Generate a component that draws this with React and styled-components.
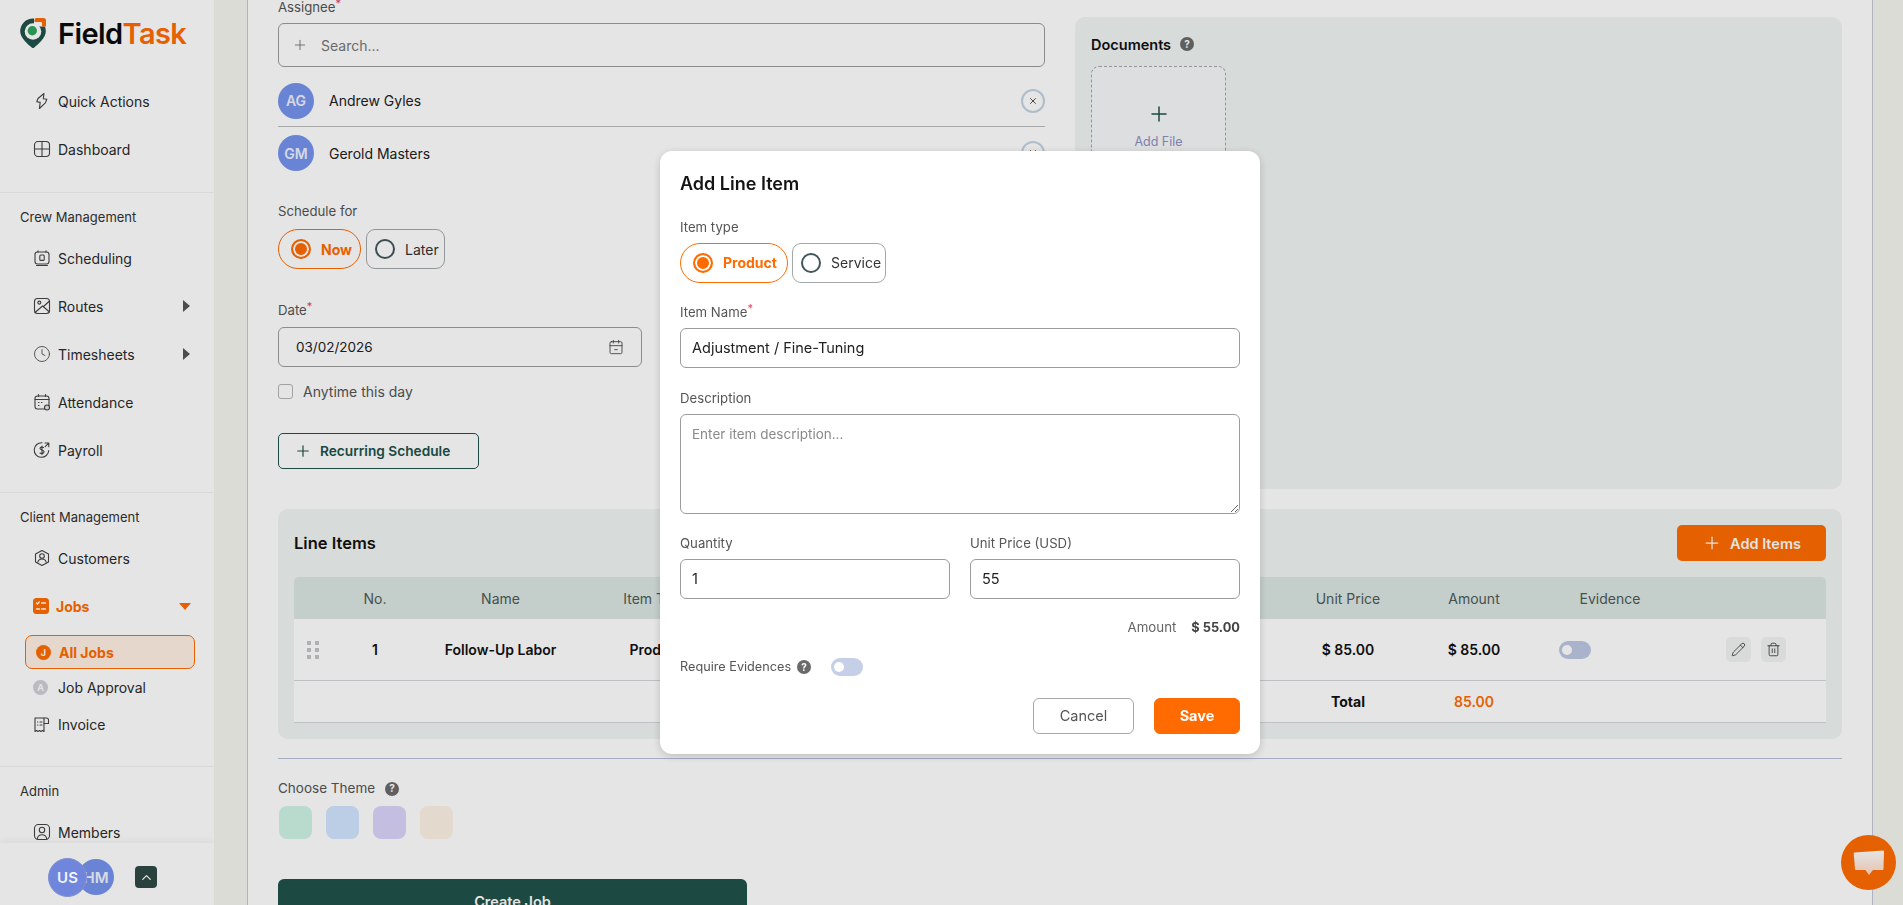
import React from "react";
import styled, { createGlobalStyle } from "styled-components";
import { Plus, X, Clock, ChevronUp, Pencil, Trash2, CalendarMinus2 } from "lucide-react";

const ACCENT = "#ff6b00";
const GREEN = "#205249";

const GlobalStyle = createGlobalStyle`
  html, body, #root { height: 100%; }
  body {
    margin: 0;
    overflow: hidden;
    background: #fff;
    color: #222;
    font-family: "Inter", "Liberation Sans", sans-serif;
    font-size: 14px;
  }
  * { box-sizing: border-box; }
`;

const Stroke = ({ children, size = 18 }) => (
  <svg width={size} height={size} viewBox="0 0 18 18" fill="none" stroke="currentColor" strokeWidth="1.1" strokeLinecap="round" strokeLinejoin="round">
    {children}
  </svg>
);

const icons = {
  quick: <Stroke><path d="M11 1.5 5 6.5 3.8 9.8l3.4.6L6.4 16.5l6-5.6 1.4-3.6-3.5-.5L11 1.5Z" /></Stroke>,
  dashboard: <Stroke><rect x="1.5" y="1.5" width="15" height="15" rx="3.5" /><path d="M9 1.5v15M1.5 9h15" /></Stroke>,
  scheduling: <Stroke><rect x="2" y="3" width="14" height="12" rx="2.5" /><path d="M5 1.8V3M13 1.8V3M3.5 16.5h11" /><rect x="6.8" y="6" width="4.4" height="5.4" rx="1" /></Stroke>,
  routes: <Stroke><rect x="1.5" y="1.5" width="15" height="15" rx="3" /><path d="m2 15.5 7.5-6.5 7 6M10.5 9.5l5.5-5" /><circle cx="6.3" cy="5.6" r="1.5" /></Stroke>,
  attendance: <Stroke><rect x="2" y="3" width="14" height="13" rx="2.5" /><path d="M2 6.5h14M5.5 1.6V3.500M12.500 1.6V3.500M5.500 9.500h.5M8.500 9.500h.5M5.500 12.500h.5" /><circle cx="14" cy="14.500" r="2.500" fill="#e5e5e5" /></Stroke>,
  payroll: <Stroke><path d="M15.800 9.500A7.300 7.300 0 1 1 9 1.700" /><path d="M12 2h3.800v3.800M15.500 2.300l-3.300 3.300" /><path d="M10.500 6.500C9.500 5.800 7 5.900 7 7.500S11 9 11 10.800 8.300 12.800 7 12M9 5v8.500" /></Stroke>,
  customers: <Stroke><path d="M9 1.500 15.500 5v8L9 16.500 2.500 13V5L9 1.500Z" /><circle cx="9" cy="7" r="2.300" /><path d="M4.800 13.300c.5-2.300 2.300-3.300 4.200-3.300s3.700 1 4.200 3.300" /></Stroke>,
  invoice: <Stroke><path d="M2 2h9v13.500l-1.500-1-1.500 1-1.500-1-1.500 1-1.500-1-1.500 1V2Z" /><path d="M4.500 6h.3M7 6h2M4.500 9h.3M7 9h2M11 2h2.500a2 2 0 0 1 2 2v3.500H11" /></Stroke>,
  members: <Stroke><rect x="1.500" y="1.500" width="15" height="15" rx="4" /><circle cx="9" cy="7" r="2.700" /><path d="M4.300 16c.3-2.800 2.300-4.200 4.700-4.200s4.400 1.400 4.700 4.200" /></Stroke>,
};

const JobsIcon = () => (
  <svg width="16" height="16" viewBox="0 0 16 16">
    <rect width="16" height="16" rx="3.500" fill={ACCENT} />
    <path d="M3.500 5l1 1 1.800-2M8.500 5h4M3.500 11h3M8.500 11h4" stroke="#fff" strokeWidth="1.300" fill="none" strokeLinecap="round" />
  </svg>
);

const Logo = () => (
  <svg width="28" height="32" viewBox="0 0 28 32">
    <path d="M14 1.500A12.800 12.800 0 0 0 1.200 14.300C1.200 21 9 27.500 13 30.700c.6.500 1.400.5 2 0 4-3.200 11.800-9.700 11.800-16.400 0-1.700-.3-3.300-.9-4.800H15V1.500h-1Z" fill={GREEN} />
    <circle cx="14" cy="14.500" r="8.300" fill="#fff" />
    <circle cx="13.300" cy="13.800" r="4.700" fill="#2ea55c" />
    <path d="M15.500 3a2 2 0 0 1 2-2h7a2.500 2.500 0 0 1 2.500 2.500v6H23V6a1 1 0 0 0-1-1h-6.500V3Z" fill={ACCENT} />
  </svg>
);

const Shell = styled.div`
  display: flex;
  height: 905px;
  overflow: hidden;
`;

const Sidebar = styled.aside`
  position: relative;
  flex: 0 0 214px;
  height: 100%;
  overflow: hidden;
  background: #fff;
`;

const Brand = styled.div`
  display: flex;
  align-items: center;
  gap: 11px;
  height: 77px;
  padding: 0 0 11px 19px;
`;

const BrandName = styled.div`
  font-size: 29px;
  font-weight: 600;
  letter-spacing: -0.6px;
  color: #0c0c0c;
  span { color: ${ACCENT}; }
`;

const NavSection = styled.div`
  padding-bottom: ${(p) => p.$pad || 18}px;
  border-bottom: 1px solid #f2f2f2;
  &:last-of-type { border-bottom: none; }
`;

const SectionTitle = styled.div`
  height: 16px;
  margin: 16px 0 9px 20px;
  font-size: 13px;
  line-height: 16px;
  color: #333;
`;

const NavRow = styled.div`
  display: flex;
  align-items: center;
  height: 48px;
  padding: 0 20px 0 33px;
  color: ${(p) => (p.$active ? ACCENT : "#2b2b2b")};
  font-weight: ${(p) => (p.$active ? 700 : 400)};
  svg { color: #444; flex: none; }
`;

const NavLabel = styled.span`
  flex: 1;
  margin-left: 7px;
  font-size: 14px;
`;

const SubNav = styled.div`
  margin: 5px 19px 5px 25px;
`;

const SubRow = styled.div`
  display: flex;
  align-items: center;
  height: ${(p) => (p.$active ? "34px" : "37px")};
  padding-left: ${(p) => (p.$active ? "10px" : "8px")};
  border: ${(p) => (p.$active ? `1px solid ${ACCENT}` : "none")};
  border-radius: 7px;
  background: ${(p) => (p.$active ? "#fff0e3" : "transparent")};
  color: ${(p) => (p.$active ? ACCENT : "#2b2b2b")};
  font-weight: ${(p) => (p.$active ? 700 : 400)};
  font-size: 14px;
  svg { color: #444; flex: none; }
`;

const SubDot = styled.span`
  display: flex;
  align-items: center;
  justify-content: center;
  flex: none;
  width: 15px;
  height: 15px;
  margin-right: ${(p) => (p.$active ? "8px" : "10px")};
  border-radius: 50%;
  background: ${(p) => (p.$active ? ACCENT : "#d0d0d6")};
  color: #fff;
  font-size: 9px;
  font-weight: 700;
`;

const Caret = styled.span`
  width: 0;
  height: 0;
  ${(p) =>
    p.$down
      ? `border-left: 6px solid transparent; border-right: 6px solid transparent; border-top: 7px solid ${ACCENT};`
      : `border-top: 6px solid transparent; border-bottom: 6px solid transparent; border-left: 7px solid #555;`}
  margin-right: ${(p) => (p.$down ? "3px" : "4px")};
`;

const SideFooter = styled.div`
  position: absolute;
  left: 0;
  right: 0;
  bottom: 0;
  display: flex;
  align-items: center;
  height: 62px;
  padding: 6px 0 0 48px;
  background: #fff;
  box-shadow: 0 -2px 8px rgba(0, 0, 0, 0.05);
`;

const FooterAvatar = styled.div`
  display: flex;
  align-items: center;
  justify-content: center;
  flex: none;
  width: ${(p) => p.$size}px;
  height: ${(p) => p.$size}px;
  margin-left: ${(p) => p.$shift || 0}px;
  border-radius: 50%;
  background: ${(p) => p.$bg};
  color: #f2f4ff;
  font-size: 15px;
  font-weight: 600;
  z-index: ${(p) => p.$z || 0};
  ${(p) => p.$ring && "border: 1px solid #7f8fd0;"}
`;

const FooterToggle = styled.div`
  display: flex;
  align-items: center;
  justify-content: center;
  width: 22px;
  height: 22px;
  margin-left: 21px;
  border-radius: 4px;
  background: #2f4a45;
  color: #fff;
`;

const Gutter = styled.div`
  flex: 0 0 ${(p) => p.$width}px;
  background: #f5f5f0;
`;

const Main = styled.main`
  flex: 1;
  min-width: 0;
  height: 100%;
  overflow: hidden;
  padding: 0 30px;
  background: #fff;
  border-left: 1px solid #c6c8d8;
  border-right: 1px solid #c6c8d8;
`;

const TopGrid = styled.div`
  display: grid;
  grid-template-columns: 767px 767px;
  gap: 30px;
  width: 1564px;
  height: 489px;
`;

const FormColumn = styled.div`
  display: flex;
  flex-direction: column;
  align-items: flex-start;
  margin-top: -1px;
`;

const FieldLabel = styled.label`
  display: block;
  margin-top: ${(p) => p.$top || 0}px;
  font-size: 13.200px;
  line-height: 17px;
  color: #555;
  sup {
    color: #e5455f;
    font-size: 11px;
    line-height: 0;
  }
`;

const SearchBox = styled.div`
  display: flex;
  align-items: center;
  width: 100%;
  height: 44px;
  margin-top: 7px;
  padding-left: 13px;
  border: 1px solid #9c9c9c;
  border-radius: 6px;
  color: #777;
  svg { color: #777; }
  span { margin-left: 13px; }
`;

const AssigneeRow = styled.div`
  display: flex;
  align-items: center;
  width: 100%;
  height: ${(p) => (p.$last ? "52px" : "60px")};
  padding-top: ${(p) => (p.$last ? "0" : "8px")};
  border-bottom: ${(p) => (p.$last ? "none" : "1px solid #bdbdbd")};
`;

const Avatar = styled.div`
  display: flex;
  align-items: center;
  justify-content: center;
  flex: none;
  width: 36px;
  height: 36px;
  border-radius: 50%;
  background: #7594ec;
  color: #eef1ff;
  font-size: 14px;
  font-weight: 600;
`;

const AssigneeName = styled.span`
  flex: 1;
  margin-left: 15px;
  font-size: 14px;
  color: #222;
`;

const RemoveButton = styled.span`
  display: flex;
  align-items: center;
  justify-content: center;
  width: 24px;
  height: 24px;
  border: 2px solid #c3d3e3;
  border-radius: 50%;
  color: #333;
`;

const RadioRow = styled.div`
  display: flex;
  gap: ${(p) => p.$gap}px;
  margin-top: ${(p) => p.$top}px;
`;

const RadioPill = styled.div`
  display: flex;
  align-items: center;
  gap: 10px;
  width: ${(p) => p.$width}px;
  height: 40px;
  padding-left: ${(p) => (p.$on ? 12 : 8)}px;
  border: 1px solid ${(p) => (p.$on ? ACCENT : "#a3a9ab")};
  border-radius: ${(p) => (p.$on ? "20px" : "9px")};
  color: ${(p) => (p.$on ? ACCENT : "#333")};
  font-size: 14px;
  font-weight: ${(p) => (p.$on ? 700 : 400)};
`;

const RadioMark = styled.span`
  flex: none;
  width: 20px;
  height: 20px;
  border-radius: 50%;
  border: 2px solid ${(p) => (p.$on ? ACCENT : "#44565c")};
  background: ${(p) => (p.$on ? ACCENT : "transparent")};
  box-shadow: ${(p) => (p.$on ? "inset 0 0 0 2px #fff" : "none")};
`;

const DateField = styled.div`
  display: flex;
  align-items: center;
  justify-content: space-between;
  width: 364px;
  height: 40px;
  margin-top: 8px;
  padding: 0 17px;
  border: 1px solid #9c9c9c;
  border-radius: 6px;
  color: #222;
  font-size: 13.500px;
  svg { color: #444; }
`;

const CheckRow = styled.div`
  display: flex;
  align-items: center;
  gap: 10px;
  margin-top: 16px;
  color: #555;
  font-size: 14px;
`;

const CheckBox = styled.span`
  width: 15px;
  height: 15px;
  border: 1px solid #b5b5b5;
  border-radius: 3px;
`;

const OutlineButton = styled.div`
  display: flex;
  align-items: center;
  gap: 8px;
  width: 201px;
  height: 36px;
  margin-top: 33px;
  padding-left: 15px;
  border: 1px solid ${GREEN};
  border-radius: 5px;
  color: ${GREEN};
  font-size: 13.700px;
  font-weight: 600;
`;

const DocsPanel = styled.section`
  margin-top: 17px;
  padding: 18px 16px;
  border-radius: 10px;
  background: #f0f4f2;
`;

const DocsTitle = styled.div`
  display: flex;
  align-items: center;
  gap: 9px;
  height: 18px;
  font-size: 14.500px;
  font-weight: 600;
  color: #111;
`;

const Help = styled.span`
  display: inline-flex;
  align-items: center;
  justify-content: center;
  width: 14px;
  height: 14px;
  border-radius: 50%;
  background: #6a6a6a;
  color: #fff;
  font-size: 10px;
  font-weight: 700;
`;

const AddFile = styled.div`
  display: flex;
  flex-direction: column;
  align-items: center;
  width: 135px;
  height: 135px;
  margin-top: 13px;
  padding-top: 35px;
  border: 1px dashed #a8a8a8;
  border-radius: 8px;
  background: #f7f8f9;
  color: ${GREEN};
  span {
    margin-top: 8px;
    color: #8d8fc0;
    font-size: 12.500px;
  }
`;

const LinePanel = styled.section`
  margin-top: 20px;
  width: 1564px;
  height: 230px;
  padding: 16px;
  border-radius: 10px;
  background: #f0f4f2;
`;

const LineHead = styled.div`
  display: flex;
  align-items: center;
  justify-content: space-between;
  height: 36px;
`;

const LineTitle = styled.h2`
  margin: 0;
  font-size: 16.500px;
  font-weight: 600;
  color: #111;
`;

const AddButton = styled.div`
  display: flex;
  align-items: center;
  justify-content: center;
  gap: 8px;
  width: 149px;
  height: 36px;
  border-radius: 5px;
  background: ${ACCENT};
  color: #fff;
  font-size: 14.500px;
  font-weight: 600;
`;

const TableRow = styled.div`
  display: grid;
  grid-template-columns: 47px 68px 183px 128px 440px 120px 136px 116px 156px 138px;
  align-items: center;
  height: ${(p) => p.$height}px;
  margin-top: ${(p) => p.$top || 0}px;
  background: ${(p) => p.$bg};
  border-bottom: ${(p) => (p.$line ? "1px solid #d5d8dc" : "none")};
  border-radius: ${(p) => (p.$head ? "5px 5px 0 0" : "0")};
`;

const Cell = styled.div`
  text-align: center;
  font-size: 14px;
  font-weight: ${(p) => p.$weight || 400};
  color: ${(p) => p.$color || (p.$head ? "#4f5a58" : "#111")};
  white-space: nowrap;
`;

const Grip = styled.div`
  display: grid;
  grid-template-columns: 4px 4px;
  gap: 3px 4px;
  margin-left: 13px;
  i {
    width: 4px;
    height: 4px;
    background: #c4c4c8;
  }
`;

const Toggle = styled.span`
  position: relative;
  display: block;
  width: 32px;
  height: 18px;
  margin-left: ${(p) => p.$left || 0}px;
  border-radius: 9px;
  background: ${(p) => p.$bg || "#bdc8e4"};
  &::after {
    content: "";
    position: absolute;
    left: 3px;
    top: 4px;
    width: 10px;
    height: 10px;
    border-radius: 50%;
    background: #fff;
  }
`;

const Actions = styled.div`
  display: flex;
  gap: 10px;
  margin-left: 38px;
`;

const ActionButton = styled.span`
  display: flex;
  align-items: center;
  justify-content: center;
  width: 25px;
  height: 25px;
  border-radius: 5px;
  background: #f2f4f4;
  color: #333;
`;

const Rule = styled.hr`
  width: 1564px;
  margin: 19px 0 0;
  border: none;
  border-top: 1px solid #bcc0da;
`;

const ThemeLabel = styled.div`
  display: flex;
  align-items: center;
  gap: 10px;
  margin-top: 21px;
  color: #555;
  font-size: 13.500px;
  line-height: 17px;
`;

const Swatches = styled.div`
  display: flex;
  gap: 14px;
  margin: 9px 0 0 1px;
`;

const Swatch = styled.span`
  width: 33px;
  height: 33px;
  border-radius: 8px;
  background: ${(p) => p.$color};
`;

const CreateButton = styled.div`
  display: flex;
  align-items: center;
  justify-content: center;
  width: 469px;
  height: 44px;
  margin-top: 40px;
  border-radius: 6px;
  background: ${GREEN};
  color: #fff;
  font-size: 14.500px;
  font-weight: 600;
`;

const ChatBubble = styled.div`
  position: fixed;
  left: 1841px;
  top: 835px;
  display: flex;
  align-items: center;
  justify-content: center;
  width: 55px;
  height: 55px;
  border-radius: 50%;
  background: ${ACCENT};
`;

const Backdrop = styled.div`
  position: fixed;
  inset: 0;
  display: flex;
  align-items: center;
  justify-content: center;
  padding-left: 17px;
  background: rgba(0, 0, 0, 0.1);
`;

const Modal = styled.div`
  width: 600px;
  margin-bottom: 1px;
  padding: 22px 20px 20px;
  border-radius: 12px;
  background: #fff;
  box-shadow: 0 2px 8px rgba(0, 0, 0, 0.18);
`;

const ModalTitle = styled.h3`
  margin: 0;
  font-size: 18px;
  line-height: 22px;
  font-weight: 600;
  color: #141414;
`;

const ModalField = styled.div`
  margin-top: ${(p) => p.$top}px;
  flex: ${(p) => (p.$grow ? 1 : "none")};
`;

const TextInput = styled.input`
  display: block;
  width: 100%;
  height: 40px;
  margin-top: 7px;
  padding: 0 11px;
  border: 1px solid #9c9c9c;
  border-radius: 6px;
  outline: none;
  background: #fff;
  color: #222;
  font: inherit;
  font-size: 14.500px;
`;

const TextArea = styled.textarea`
  display: block;
  width: 100%;
  height: 100px;
  margin-top: 7px;
  padding: 11px;
  border: 1px solid #9c9c9c;
  border-radius: 6px;
  outline: none;
  font: inherit;
  font-size: 13.500px;
  &::placeholder { color: #8a8a8a; }
`;

const TwoUp = styled.div`
  display: flex;
  gap: 20px;
`;

const AmountRow = styled.div`
  display: flex;
  justify-content: flex-end;
  align-items: baseline;
  gap: 15px;
  margin-top: 20px;
  line-height: 17px;
  color: #666;
  font-size: 13.300px;
  b {
    color: #444;
    font-size: 12.800px;
    font-weight: 700;
  }
`;

const EvidenceRow = styled.div`
  display: flex;
  align-items: center;
  gap: 6px;
  height: 18px;
  margin-top: 22px;
  color: #555;
  font-size: 12.700px;
`;

const ModalActions = styled.div`
  display: flex;
  justify-content: flex-end;
  gap: 20px;
  margin-top: 22px;
`;

const ModalButton = styled.div`
  display: flex;
  align-items: center;
  justify-content: center;
  width: ${(p) => p.$width}px;
  height: 36px;
  border: 1px solid ${(p) => (p.$primary ? ACCENT : "#a8a8a8")};
  border-radius: 6px;
  background: ${(p) => (p.$primary ? ACCENT : "#fff")};
  color: ${(p) => (p.$primary ? "#fff" : "#555")};
  font-size: 14.500px;
  font-weight: ${(p) => (p.$primary ? 700 : 400)};
`;

const themes = ["#cff4e6", "#d1e6ff", "#dbd5fb", "#fdf2e5"];

const NavItem = ({ icon, label, caret }) => (
  <NavRow>
    {icon}
    <NavLabel>{label}</NavLabel>
    {caret && <Caret />}
  </NavRow>
);

export default function App() {
  return (
    <React.Fragment>
      <GlobalStyle />
      <Shell>
        <Sidebar>
          <Brand>
            <Logo />
            <BrandName>
              Field<span>Task</span>
            </BrandName>
          </Brand>
          <NavSection $pad={19}>
            <NavItem icon={icons.quick} label="Quick Actions" />
            <NavItem icon={icons.dashboard} label="Dashboard" />
          </NavSection>
          <NavSection>
            <SectionTitle>Crew Management</SectionTitle>
            <NavItem icon={icons.scheduling} label="Scheduling" />
            <NavItem icon={icons.routes} label="Routes" caret />
            <NavItem icon={<Clock size={18} strokeWidth={1.1} />} label="Timesheets" caret />
            <NavItem icon={icons.attendance} label="Attendance" />
            <NavItem icon={icons.payroll} label="Payroll" />
          </NavSection>
          <NavSection>
            <SectionTitle>Client Management</SectionTitle>
            <NavItem icon={icons.customers} label="Customers" />
            <NavRow $active>
              <JobsIcon />
              <NavLabel>Jobs</NavLabel>
              <Caret $down />
            </NavRow>
            <SubNav>
              <SubRow $active>
                <SubDot $active>J</SubDot>
                All Jobs
              </SubRow>
              <SubRow>
                <SubDot>A</SubDot>
                Job Approval
              </SubRow>
              <SubRow>
                {icons.invoice}
                <NavLabel>Invoice</NavLabel>
              </SubRow>
            </SubNav>
          </NavSection>
          <NavSection>
            <SectionTitle>Admin</SectionTitle>
            <NavItem icon={icons.members} label="Members" />
          </NavSection>
          <SideFooter>
            <FooterAvatar $size={39} $bg="#6f86dc" $z={1} $ring>US</FooterAvatar>
            <FooterAvatar $size={36} $bg="#7594ec" $shift={-9}>HM</FooterAvatar>
            <FooterToggle>
              <ChevronUp size={15} />
            </FooterToggle>
          </SideFooter>
        </Sidebar>
        <Gutter $width={33} />
        <Main>
          <TopGrid>
            <FormColumn>
              <FieldLabel>
                Assignee<sup>*</sup>
              </FieldLabel>
              <SearchBox>
                <Plus size={16} strokeWidth={1.4} />
                <span>Search...</span>
              </SearchBox>
              <AssigneeRow>
                <Avatar>AG</Avatar>
                <AssigneeName>Andrew Gyles</AssigneeName>
                <RemoveButton>
                  <X size={10} />
                </RemoveButton>
              </AssigneeRow>
              <AssigneeRow $last>
                <Avatar>GM</Avatar>
                <AssigneeName>Gerold Masters</AssigneeName>
                <RemoveButton>
                  <X size={10} />
                </RemoveButton>
              </AssigneeRow>
              <FieldLabel $top={24}>Schedule for</FieldLabel>
              <RadioRow $top={9} $gap={5}>
                <RadioPill $on $width={83}>
                  <RadioMark $on />
                  Now
                </RadioPill>
                <RadioPill $width={79}>
                  <RadioMark />
                  Later
                </RadioPill>
              </RadioRow>
              <FieldLabel $top={33}>
                Date<sup>*</sup>
              </FieldLabel>
              <DateField>
                03/02/2026
                <CalendarMinus2 size={16} strokeWidth={1.3} />
              </DateField>
              <CheckRow>
                <CheckBox />
                Anytime this day
              </CheckRow>
              <OutlineButton>
                <Plus size={18} strokeWidth={1.6} />
                Recurring Schedule
              </OutlineButton>
            </FormColumn>
            <DocsPanel>
              <DocsTitle>
                Documents <Help>?</Help>
              </DocsTitle>
              <AddFile>
                <Plus size={24} strokeWidth={1.5} />
                <span>Add File</span>
              </AddFile>
            </DocsPanel>
          </TopGrid>
          <LinePanel>
            <LineHead>
              <LineTitle>Line Items</LineTitle>
              <AddButton>
                <Plus size={20} strokeWidth={1.5} />
                Add Items
              </AddButton>
            </LineHead>
            <TableRow $head $height={42} $top={16} $bg="#dbe6e3">
              <Cell $head />
              <Cell $head>No.</Cell>
              <Cell $head>Name</Cell>
              <Cell $head>Item Type</Cell>
              <Cell $head>Description</Cell>
              <Cell $head>Quantity</Cell>
              <Cell $head>Unit Price</Cell>
              <Cell $head>Amount</Cell>
              <Cell $head>Evidence</Cell>
              <Cell $head />
            </TableRow>
            <TableRow $height={62} $bg="#fff" $line>
              <Grip>
                <i /><i /><i /><i /><i /><i />
              </Grip>
              <Cell $weight={600}>1</Cell>
              <Cell $weight={600}>Follow-Up Labor</Cell>
              <Cell $weight={600}>Product</Cell>
              <Cell />
              <Cell $weight={600}>1</Cell>
              <Cell $weight={600}>$ 85.00</Cell>
              <Cell $weight={600}>$ 85.00</Cell>
              <Toggle $left={27} />
              <Actions>
                <ActionButton>
                  <Pencil size={15} strokeWidth={1.3} />
                </ActionButton>
                <ActionButton>
                  <Trash2 size={15} strokeWidth={1.3} />
                </ActionButton>
              </Actions>
            </TableRow>
            <TableRow $height={42} $bg="#fff" $line>
              <Cell /><Cell /><Cell /><Cell /><Cell /><Cell />
              <Cell $weight={700}>Total</Cell>
              <Cell $weight={600} $color={ACCENT}>85.00</Cell>
              <Cell /><Cell />
            </TableRow>
          </LinePanel>
          <Rule />
          <ThemeLabel>
            Choose Theme <Help>?</Help>
          </ThemeLabel>
          <Swatches>
            {themes.map((c) => (
              <Swatch key={c} $color={c} />
            ))}
          </Swatches>
          <CreateButton>Create Job</CreateButton>
        </Main>
        <Gutter $width={30} />
        <ChatBubble>
          <svg width="32" height="30" viewBox="0 0 32 30">
            <defs>
              <linearGradient id="chatFill" x1="0" y1="0" x2="0" y2="1">
                <stop offset="0" stopColor="#fff" />
                <stop offset="1" stopColor="#ffd9c2" />
              </linearGradient>
            </defs>
            <path d="M1.500 4.500 30 2.500c.6 0 1 .4 1 1l-.5 17.500c0 .6-.4 1-1 1H20l-4 5-3.500-5H3c-.6 0-1-.4-1-1L.700 5.500c0-.6.300-1 .800-1Z" fill="url(#chatFill)" />
          </svg>
        </ChatBubble>
        <Backdrop>
          <Modal>
            <ModalTitle>Add Line Item</ModalTitle>
            <ModalField $top={24}>
              <FieldLabel>Item type</FieldLabel>
              <RadioRow $top={7} $gap={4}>
                <RadioPill $on $width={108}>
                  <RadioMark $on />
                  Product
                </RadioPill>
                <RadioPill $width={94}>
                  <RadioMark />
                  Service
                </RadioPill>
              </RadioRow>
            </ModalField>
            <ModalField $top={21}>
              <FieldLabel>
                Item Name<sup>*</sup>
              </FieldLabel>
              <TextInput defaultValue="Adjustment / Fine-Tuning" />
            </ModalField>
            <ModalField $top={22}>
              <FieldLabel>Description</FieldLabel>
              <TextArea placeholder="Enter item description..." />
            </ModalField>
            <TwoUp>
              <ModalField $top={21} $grow>
                <FieldLabel>Quantity</FieldLabel>
                <TextInput defaultValue="1" />
              </ModalField>
              <ModalField $top={21} $grow>
                <FieldLabel>Unit Price (USD)</FieldLabel>
                <TextInput defaultValue="55" />
              </ModalField>
            </TwoUp>
            <AmountRow>
              Amount <b>$ 55.00</b>
            </AmountRow>
            <EvidenceRow>
              Require Evidences <Help>?</Help>
              <Toggle $left={14} $bg="#c5cfe8" />
            </EvidenceRow>
            <ModalActions>
              <ModalButton $width={101}>Cancel</ModalButton>
              <ModalButton $primary $width={86}>Save</ModalButton>
            </ModalActions>
          </Modal>
        </Backdrop>
      </Shell>
    </React.Fragment>
  );
}
